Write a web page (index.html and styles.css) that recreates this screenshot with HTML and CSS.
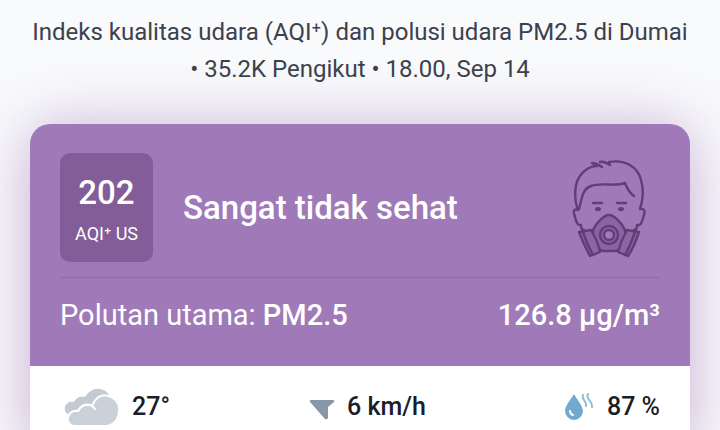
FILE: index.html
```html
<!DOCTYPE html>
<html lang="id">
<head>
<meta charset="utf-8">
<meta name="viewport" content="width=device-width, initial-scale=1">
<title>Kualitas udara Dumai</title>
<link rel="stylesheet" href="styles.css">
</head>
<body>
<main class="page">
  <p class="intro">Indeks kualitas udara (AQI⁺) dan polusi udara PM2.5 di Dumai<br>• 35.2K Pengikut • 18.00, Sep 14</p>
  <section class="card">
    <div class="summary">
      <div class="status">
        <div class="badge">
          <span class="badge-value">202</span>
          <span class="badge-label">AQI⁺ US</span>
        </div>
        <h1 class="level">Sangat tidak sehat</h1>
        <svg class="face" viewBox="0 0 100 115" aria-hidden="true">
          <g fill="none" stroke="#5f3f74" stroke-width="2.4" stroke-linecap="round" stroke-linejoin="round">
            <path d="M18 60C14 49 14 34 20 26C25 19 31 16 37 16L32 13C36 13 39 15 42 17"/>
            <path d="M40 12C44 11 47 13 50 15L49 12C65 9 78 17 81 30C84 40 83 50 80 59"/>
            <path d="M19 59C22 49 22 39 31 36C42 32 54 37 65 33C67 38 69 43 74 46"/>
            <path d="M18 60C13 58 13 62 15 67C16 72 18 76 21 75C21 78 22 80 24 80M80 59C86 58 85 63 83 68C82 73 80 76 77 75C77 78 76 80 74 80"/>
            <path d="M33 53H42M57 53H66"/>
            <path fill="#8b62a4" d="M33 80C36 73 44 65 49 65S62 73 65 80L66 96C61 98 59 101 55 101H44C40 101 38 98 33 96Z"/>
            <path fill="#8d65a6" d="M19 82L31 80C35 87 39 95 40 102L30 106C26 99 22 90 19 82ZM67 80L79 82C76 91 73 99 68 106L58 102C60 94 63 87 67 80Z"/>
            <path d="M23 82C26 91 29 98 33 105M75 82C72 91 69 98 65 105"/>
            <circle cx="49" cy="85" r="9" fill="#8b62a4"/>
            <circle cx="49" cy="85" r="5" fill="#a17bb9"/>
          </g>
          <g fill="#5f3f74"><ellipse cx="38" cy="59" rx="3" ry="2"/><ellipse cx="61" cy="59" rx="3" ry="2"/></g>
        </svg>
      </div>
      <div class="pollutant">
        <span>Polutan utama: <strong>PM2.5</strong></span>
        <strong>126.8 µg/m³</strong>
      </div>
    </div>
    <div class="weather">
      <div class="reading">
        <svg class="cloud" viewBox="0 0 56 38" aria-hidden="true">
          <path fill="#c3cad1" d="M7 28C2 26 0 23 1 19C2 15 6 13 10 14C12 9 17 8 21 9C25 3 30 0 36 1C41 2 44 4 45 8L31 24Z"/>
          <path fill="#cbd1d8" stroke="#fff" stroke-width="2" d="M11 38C5 38 3 33 4 29C5 25 9 22 14 23C17 17 23 15 28 18C32 9 38 6 44 8C52 10 56 16 55 24C54 33 48 38 40 38Z"/>
          <path fill="none" stroke="#fff" stroke-width="2" stroke-linecap="round" d="M14 23C18 15 27 15 31 21"/>
        </svg>
        <span>27°</span>
      </div>
      <div class="reading">
        <svg class="wind" viewBox="0 0 26 26" aria-hidden="true"><path fill="#8896aa" d="M2 6H24Q26 6 25 8L19 13V24Q18 26 16 25L1 8Q0 6 2 6Z"/></svg>
        <span>6 km/h</span>
      </div>
      <div class="reading">
        <svg class="humidity" viewBox="0 0 30 28" aria-hidden="true">
          <path fill="#70aad0" d="M9 1C11 5 18 13 18 18A9 9 0 0 1 0 18C0 13 6 6 9 1Z"/>
          <path fill="none" stroke="#fff" stroke-width="2" stroke-linecap="round" d="M5 18Q5 21 8 22"/>
          <path fill="none" stroke="#8fbcd6" stroke-width="2" stroke-linecap="round" d="M18 2C16 6 22 8 21 13M23 1C20 6 28 8 27 14"/>
        </svg>
        <span>87 %</span>
      </div>
    </div>
  </section>
</main>
</body>
</html>
```
FILE: styles.css
```css
* { box-sizing: border-box; }

body {
  margin: 0;
  background: #f9fafc;
  color: #3c414d;
  font-family: Roboto, "Liberation Sans", sans-serif;
  overflow-x: hidden;
}

.page { padding: 14px 30px 0; }

.intro {
  margin: 0 -10px 36px;
  font-size: 24px;
  line-height: 37px;
  text-align: center;
}

.card {
  border-radius: 20px;
  background: #fff;
  box-shadow: 0 4px 60px rgba(136, 78, 160, 0.45);
  overflow: hidden;
}

.summary {
  padding: 29px 30px 12px;
  background: #a07ab8;
  color: #fff;
}

.status {
  display: flex;
  align-items: center;
  gap: 30px;
  padding-bottom: 15px;
  border-bottom: 1px solid #936bab;
}

.badge {
  display: flex;
  flex-direction: column;
  align-items: center;
  gap: 8px;
  padding: 20px 15px 16px;
  border-radius: 10px;
  background: #825d98;
  white-space: nowrap;
}

.badge-value {
  font-size: 33px;
  font-weight: 500;
  line-height: 40px;
}

.badge-label {
  font-size: 18px;
  line-height: 25px;
}

.level {
  flex: 1;
  margin: 0;
  font-size: 33px;
  font-weight: 500;
  line-height: 40px;
}

.face { width: 100px; height: 115px; margin: -4px 0; }

.pollutant {
  display: flex;
  justify-content: space-between;
  padding: 17px 0 19px;
  font-size: 29px;
  line-height: 40px;
}

.pollutant strong { font-weight: 500; }

.weather {
  display: flex;
  align-items: center;
  justify-content: space-between;
  padding: 21px 30px 24px;
  color: #1b1d29;
  font-size: 25px;
  font-weight: 500;
  line-height: 40px;
}

.reading {
  display: flex;
  align-items: center;
  gap: 12px;
}

.cloud { width: 56px; height: 38px; margin-left: 4px; }
.wind { width: 26px; height: 26px; }
.humidity { width: 30px; height: 28px; }
```
